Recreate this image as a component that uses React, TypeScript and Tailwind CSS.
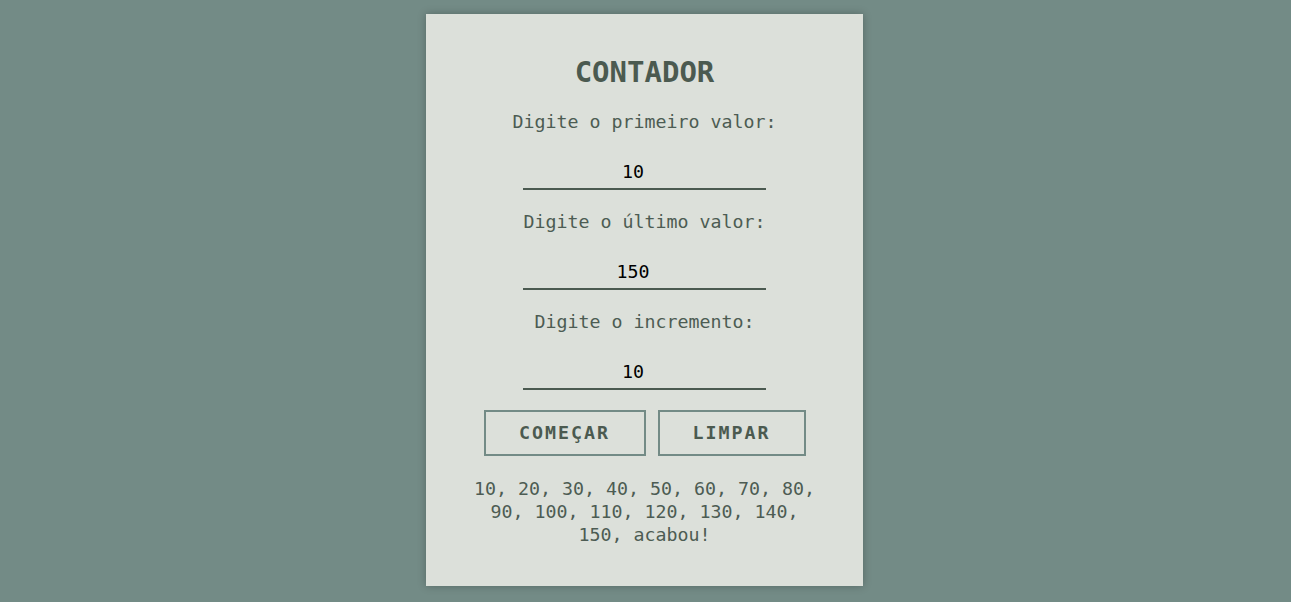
import React from "react";

const mono = "font-['Consolas','DejaVu_Sans_Mono',monospace]";

function Field({ label, value, first }: { label: string; value: string; first?: boolean }) {
  return (
    <>
      <label className={`${first ? "mt-[18px]" : "mt-5"} h-6 leading-6 text-[18.3px] text-[#4d5c53]`}>{label}</label>
      <input
        type="number"
        defaultValue={value}
        className={`${mono} mt-5 h-9 w-[243px] border-b-2 border-[#4b5a50] bg-transparent pr-2 text-center text-[18.3px] text-black outline-none`}
      />
    </>
  );
}

export default function App() {
  return (
    <div className={`${mono} min-h-[602px] bg-[#738b86] pt-[14px] pr-[2px]`}>
      <div className="mx-auto flex w-[437px] flex-col items-center bg-[#dce0da] pt-[38px] pb-[40px] shadow-[0_0_8px_rgba(0,0,0,0.25)]">
        <h1 className="h-10 text-[29px] leading-10 font-bold text-[#4b5a50]">CONTADOR</h1>
        <Field first label="Digite o primeiro valor:" value="10" />
        <Field label="Digite o último valor:" value="150" />
        <Field label="Digite o incremento:" value="10" />
        <div className="mt-5 flex gap-3">
          <button className="h-[46px] w-[162px] border-2 border-[#738b86] text-[18.3px] font-bold tracking-[2px] text-[#4b5a50]">
            COMEÇAR
          </button>
          <button className="h-[46px] w-[148px] border-2 border-[#738b86] text-[18.3px] font-bold tracking-[2px] text-[#4b5a50]">
            LIMPAR
          </button>
        </div>
        <p className="mt-[21px] w-[360px] text-center text-[18.3px] leading-[23px] text-[#4d5c53]">
          10, 20, 30, 40, 50, 60, 70, 80, 90, 100, 110, 120, 130, 140, 150, acabou!
        </p>
      </div>
    </div>
  );
}
